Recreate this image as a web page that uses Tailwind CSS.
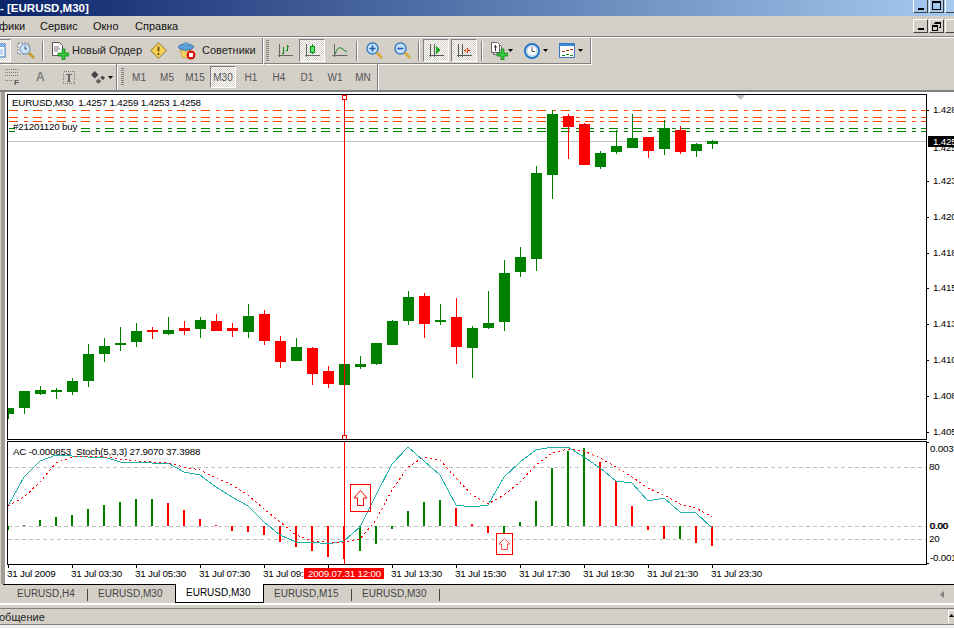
<!DOCTYPE html>
<html>
<head>
<meta charset="utf-8">
<script src="https://cdn.jsdelivr.net/npm/@tailwindcss/browser@4"></script>
</head>
<body class="m-0 overflow-hidden">
<div class="w-[954px] h-[628px] overflow-hidden bg-[#d4d0c8] flex flex-col font-['Liberation_Sans',sans-serif] text-[11px] text-black">

  <!-- title bar -->
  <div class="h-[16px] shrink-0 flex items-center justify-between bg-[linear-gradient(90deg,#0a246a,#a6caf0)] overflow-hidden">
    <span class="font-bold text-white text-[11.500px] leading-[16px] whitespace-pre">- [EURUSD,M30]</span>
    <div class="flex self-start mt-[-3px] mr-[-6px]">
      <div class="w-[15px] h-[16px] border-t border-l border-white border-r border-b border-r-[#404040] border-b-[#404040] flex items-end justify-center pb-[2px]"><div class="w-[6px] h-[2px] bg-black"></div></div>
      <div class="w-[15px] h-[16px] ml-[1px] border-t border-l border-white border-r border-b border-r-[#404040] border-b-[#404040] flex items-center justify-center"><div class="w-[9px] h-[9px] border border-t-2 border-black"></div></div>
      <div class="w-[15px] h-[16px] ml-[1px] border-t border-l border-white border-r border-b border-r-[#404040] border-b-[#404040]"></div>
    </div>
  </div>

  <!-- menu -->
  <div class="h-[21px] shrink-0 flex items-center justify-between border-b border-[#808080]">
    <div class="flex items-center text-[#111]">
      <span class="w-[40px] ml-[-1px] mr-[1px]">фики</span>
      <span class="w-[53px]">Сервис</span>
      <span class="w-[42px]">Окно</span>
      <span>Справка</span>
    </div>
    <div class="flex mr-[-6px]">
      <div class="w-[15px] h-[14px] border-t border-l border-white border-r border-b border-r-[#404040] border-b-[#404040] flex items-end justify-center pb-[2px]"><div class="w-[6px] h-[2px] bg-black"></div></div>
      <div class="w-[15px] h-[14px] ml-[1px] border-t border-l border-white border-r border-b border-r-[#404040] border-b-[#404040] flex items-center justify-center">
        <svg width="9" height="9" viewBox="0 0 9 9" shape-rendering="crispEdges"><path d="M2.500.5h6v5h-2M2 1h7M.5 3.500h5v5h-5zM0 4h6" fill="none" stroke="#000"/></svg>
      </div>
      <div class="w-[15px] h-[14px] ml-[1px] border-t border-l border-white border-r border-b border-r-[#404040] border-b-[#404040]"></div>
    </div>
  </div>

  <!-- toolbar row 1 -->
  <div class="h-[27px] shrink-0 flex border-t border-white">
    <div class="w-[263px] h-full shrink-0 flex items-center border-r border-b border-[#808080] shadow-[1px_1px_0_#fff] overflow-hidden text-[#222]">
      <div class="w-[25px] h-[23px] ml-[-14px] shrink-0 flex items-center justify-center border border-t-[#808080] border-l-[#808080] border-r-white border-b-white bg-[image:repeating-conic-gradient(#fff_0%_25%,#d4d0c8_0%_50%)] bg-[length:2px_2px]">
        <svg width="15" height="15" viewBox="0 0 15 15"><rect x="1" y="1" width="13" height="13" fill="#fff" stroke="#2f6fc0"/><rect x="1" y="1" width="13" height="3" fill="#7fb0e8"/><path d="M3 7h9M3 9h9M3 11h9" stroke="#7fb0e8"/></svg>
      </div>
      <div class="w-[26px] h-[23px] ml-[2px] shrink-0 flex items-center justify-center">
        <svg width="19" height="19" viewBox="0 0 19 19"><rect x="1" y="2" width="11" height="11" fill="#e8e8f0" stroke="#888" stroke-dasharray="2 1"/><circle cx="8" cy="8" r="5" fill="#cfe3f6" stroke="#6a8fb8"/><path d="M8 5v3h2" stroke="#405070" fill="none"/><path d="M12 12l5 5" stroke="#c89a30" stroke-width="2.500"/></svg>
      </div>
      <div class="w-[1px] h-[20px] ml-[3px] bg-[#808080] shadow-[1px_0_0_#fff] shrink-0"></div>
      <div class="flex items-center ml-[8px] shrink-0">
        <svg width="18" height="18" viewBox="0 0 18 18"><path d="M1.500 .5h7l3 3v10h-10z" fill="#fff" stroke="#555"/><path d="M3 5h5M3 7h6M3 9h4" stroke="#777"/><path d="M11 7h3v4h4v3h-4v4h-3v-4h-4v-3h4z" fill="#35c83a" stroke="#0a7a14" stroke-width=".7"/></svg>
        <span class="ml-[3px] w-[69px] whitespace-nowrap">Новый Ордер</span>
      </div>
      <svg class="ml-[9px] shrink-0" width="17" height="17" viewBox="0 0 17 17"><path d="M8.500 .7L16.300 8.500 8.500 16.300 .7 8.500z" fill="#f7cf52" stroke="#8a7030"/><path d="M8.500 4.500v5M8.500 11v2" stroke="#5a4010" stroke-width="1.600"/></svg>
      <svg class="ml-[11px] shrink-0" width="18" height="18" viewBox="0 0 18 18"><ellipse cx="8" cy="5" rx="7.500" ry="3" fill="#5ea5dd" stroke="#3a70a8"/><path d="M4 3q4-5 8 0z" fill="#79b8e8" stroke="#3a70a8" stroke-width=".6"/><path d="M2 8q6 3 12 0l-2 7q-4 2-8 0z" fill="#f5d562" stroke="#b09030" stroke-width=".6"/><circle cx="13" cy="13" r="4.500" fill="#d8140c"/><rect x="11" y="11" width="4" height="4" fill="#fff"/></svg>
      <span class="ml-[6px] whitespace-nowrap">Советники</span>
    </div>
    <div class="w-[327px] h-full shrink-0 ml-[1px] flex items-center border-r border-b border-[#808080] shadow-[1px_1px_0_#fff]">
      <div class="w-[3px] h-[21px] ml-[2px] shrink-0 bg-[image:repeating-linear-gradient(#808080_0_1px,#d4d0c8_1px_2px)]"></div>
      <!-- bar chart -->
      <div class="w-[26px] h-[23px] ml-[3px] shrink-0 flex items-center justify-center">
        <svg width="16" height="16" viewBox="0 0 16 16" shape-rendering="crispEdges"><path d="M2.500 1v13M.5 12.500h15" stroke="#666" fill="none"/><path d="M6.500 4v7M5 10h2M10.500 2v6M10 3h2M9 7h2" stroke="#0a8a1a" fill="none"/></svg>
      </div>
      <div class="w-[26px] h-[23px] ml-[1px] shrink-0 flex items-center justify-center border border-t-[#808080] border-l-[#808080] border-r-white border-b-white bg-[image:repeating-conic-gradient(#fff_0%_25%,#d4d0c8_0%_50%)] bg-[length:2px_2px]">
        <svg width="16" height="16" viewBox="0 0 16 16" shape-rendering="crispEdges"><path d="M2.500 1v13M.5 12.500h15" stroke="#666" fill="none"/><path d="M8.500 1v10" stroke="#0a8a1a"/><rect x="6.500" y="3.500" width="4" height="6" fill="#5fe06a" stroke="#0a8a1a"/></svg>
      </div>
      <div class="w-[26px] h-[23px] ml-[2px] shrink-0 flex items-center justify-center">
        <svg width="16" height="16" viewBox="0 0 16 16"><path d="M2.500 1v13M.5 12.500h15" stroke="#666" fill="none"/><path d="M3 11Q6 3 9 5t6 4" stroke="#0a8a1a" fill="none"/></svg>
      </div>
      <div class="w-[1px] h-[20px] ml-[3px] bg-[#808080] shadow-[1px_0_0_#fff] shrink-0"></div>
      <!-- zoom -->
      <div class="w-[18px] ml-[8px] shrink-0 flex justify-center">
        <svg width="17" height="17" viewBox="0 0 17 17"><circle cx="6.500" cy="6.500" r="5.500" fill="#c9e3fa" stroke="#3a7cc0" stroke-width="1.400"/><path d="M6.500 3.500v6M3.500 6.500h6" stroke="#1a5ab0" stroke-width="1.600"/><path d="M10.500 10.500l5.500 5.500" stroke="#d8a838" stroke-width="2.500"/></svg>
      </div>
      <div class="w-[18px] ml-[10px] shrink-0 flex justify-center">
        <svg width="17" height="17" viewBox="0 0 17 17"><circle cx="6.500" cy="6.500" r="5.500" fill="#c9e3fa" stroke="#3a7cc0" stroke-width="1.400"/><path d="M3.500 6.500h6" stroke="#1a5ab0" stroke-width="1.600"/><path d="M10.500 10.500l5.500 5.500" stroke="#d8a838" stroke-width="2.500"/></svg>
      </div>
      <div class="w-[1px] h-[20px] ml-[7px] bg-[#808080] shadow-[1px_0_0_#fff] shrink-0"></div>
      <div class="w-[26px] h-[23px] ml-[4px] shrink-0 flex items-center justify-center border border-t-[#808080] border-l-[#808080] border-r-white border-b-white bg-[image:repeating-conic-gradient(#fff_0%_25%,#d4d0c8_0%_50%)] bg-[length:2px_2px]">
        <svg width="16" height="16" viewBox="0 0 16 16" shape-rendering="crispEdges"><path d="M2.500 1v13M.5 12.500h15M6.500 1v13" stroke="#555" fill="none"/><path d="M8 3l5 4-5 4z" fill="#1cae2a"/></svg>
      </div>
      <div class="w-[26px] h-[23px] ml-[2px] shrink-0 flex items-center justify-center border border-t-[#808080] border-l-[#808080] border-r-white border-b-white bg-[image:repeating-conic-gradient(#fff_0%_25%,#d4d0c8_0%_50%)] bg-[length:2px_2px]">
        <svg width="16" height="16" viewBox="0 0 16 16" shape-rendering="crispEdges"><path d="M2.500 1v13M.5 12.500h15M6.500 1v13" stroke="#555" fill="none"/><path d="M8 7.500h6M11 5v5" stroke="#d81c0c"/><path d="M9 6l3 1.500-3 1.500z" fill="#e8801c"/></svg>
      </div>
      <div class="w-[1px] h-[20px] ml-[4px] bg-[#808080] shadow-[1px_0_0_#fff] shrink-0"></div>
      <!-- drop-down icons -->
      <svg class="ml-[8px] shrink-0" width="18" height="18" viewBox="0 0 18 18"><path d="M3.500 2.500h6l2 2v8h-8z" fill="#eee" stroke="#666"/><path d="M1.500 .5h6l2 2v8h-8z" fill="#fff" stroke="#666"/><path d="M5.500 3v6M4 5h3" stroke="#333" fill="none"/><path d="M11 7h3v4h4v3h-4v4h-3v-4h-4v-3h4z" fill="#35c83a" stroke="#0a7a14" stroke-width=".7"/></svg>
      <svg class="ml-[0px] shrink-0" width="5" height="3" viewBox="0 0 5 3"><path d="M0 0h5L2.500 3z" fill="#000"/></svg>
      <svg class="ml-[11px] shrink-0" width="16" height="16" viewBox="0 0 16 16"><circle cx="8" cy="8" r="7" fill="#eef4fa" stroke="#1f78c8" stroke-width="2"/><circle cx="8" cy="8" r="5" fill="#fff" stroke="#bcd"/><path d="M8 4v4.500h3" stroke="#555" fill="none"/></svg>
      <svg class="ml-[3px] shrink-0" width="5" height="3" viewBox="0 0 5 3"><path d="M0 0h5L2.500 3z" fill="#000"/></svg>
      <svg class="ml-[11px] shrink-0" width="16" height="15" viewBox="0 0 16 15" shape-rendering="crispEdges"><rect x=".5" y=".5" width="15" height="14" fill="#fff" stroke="#3a78c0"/><rect x="1" y="1" width="14" height="2" fill="#3a88d8"/><path d="M3 8h3M7 7h3M11 6h3" stroke="#b03010"/><path d="M3 12h3M7 11h3M11 12h3" stroke="#108a20"/></svg>
      <svg class="ml-[3px] shrink-0" width="5" height="3" viewBox="0 0 5 3"><path d="M0 0h5L2.500 3z" fill="#000"/></svg>
    </div>
  </div>

  <!-- toolbar row 2 -->
  <div class="h-[26px] shrink-0 flex">
    <div class="w-[117px] h-full shrink-0 flex items-center border-r border-[#808080] shadow-[1px_0_0_#fff] text-[#555]">
      <svg class="ml-[5px] shrink-0" width="15" height="16" viewBox="0 0 15 16" shape-rendering="crispEdges"><path d="M0 .5h13M0 3.500h13M0 6.500h13M0 11.500h8" stroke="#777" stroke-dasharray="1 1"/><text x="9" y="16" font-size="8" font-weight="700" fill="#555">F</text></svg>
      <span class="ml-[16px] text-[12px] font-bold text-[#808080]">A</span>
      <svg class="ml-[18px] shrink-0" width="12" height="13" viewBox="0 0 12 13" shape-rendering="crispEdges"><rect x=".5" y=".5" width="11" height="12" fill="none" stroke="#777" stroke-dasharray="1 1"/><path d="M3 3.500h6M6 3v7M4 10.500h4" stroke="#666" stroke-width="1.500"/></svg>
      <svg class="ml-[16px] shrink-0" width="14" height="13" viewBox="0 0 15 14"><path d="M0 4l4-4 4 4-4 4z" fill="#444"/><path d="M5 11l3-3 3 3-3 3z" fill="#666"/><path d="M10 7l2-2 3 2-2 3z" fill="#444"/></svg>
      <svg class="ml-[3px] shrink-0" width="5" height="3" viewBox="0 0 5 3"><path d="M0 0h5L2.500 3z" fill="#000"/></svg>
    </div>
    <div class="w-[260px] h-full ml-[1px] shrink-0 flex items-center border-r border-[#808080] shadow-[1px_0_0_#fff] text-[#555] text-[10px]">
      <div class="w-[3px] h-[18px] ml-[3px] mr-[1px] shrink-0 bg-[image:repeating-linear-gradient(#808080_0_1px,#d4d0c8_1px_2px)]"></div>
      <span class="w-[28px] text-center">M1</span>
      <span class="w-[28px] text-center">M5</span>
      <span class="w-[28px] text-center">M15</span>
      <span class="w-[26px] h-[22px] mx-[1px] flex items-center justify-center border border-t-[#808080] border-l-[#808080] border-r-white border-b-white bg-[image:repeating-conic-gradient(#fff_0%_25%,#d4d0c8_0%_50%)] bg-[length:2px_2px]">M30</span>
      <span class="w-[28px] text-center">H1</span>
      <span class="w-[28px] text-center">H4</span>
      <span class="w-[28px] text-center">D1</span>
      <span class="w-[28px] text-center">W1</span>
      <span class="w-[28px] text-center">MN</span>
    </div>
  </div>

  <!-- chart area -->
  <div class="h-[494px] shrink-0 flex border-t-2 border-[#808080] bg-white">
    <div class="w-[7px] h-full shrink-0 flex bg-white">
      <div class="w-[1px] bg-[#d4d0c8]"></div>
      <div class="w-[4px] bg-[#a09c94]"></div>
    </div>
    <div class="flex flex-col pt-[2px]">
      <!-- main panel -->
      <div class="flex">
        <div class="w-[920px] h-[346px] border border-black bg-white">
          <svg width="918" height="344" viewBox="8 95 918 344" class="block tracking-[-0.2px]">
            <g shape-rendering="crispEdges">
              <path d="M8 141.500H926" stroke="#c0c0c0"/>
              <g stroke-dasharray="9 6 4 5" fill="none">
                <path d="M9 110.500H926M9 117.500H926M9 121.500H926" stroke="#ff4500"/>
                <path d="M9 128.500H926M9 131.500H926" stroke="#008000"/>
              </g>
              <path fill="none" stroke="#008000" d="M8.500 408V419M24.500 391V414M40.500 386V395M56.500 388V399M72.500 378V395M88.500 344V387M104.500 338V362M120.500 327V351M136.500 323V347M168.500 317V335M200.500 317V338M248.500 304V338M296.500 338V361M344.500 364V385M360.500 356V369M376.500 343V365M392.500 320V345M408.500 291V325M440.500 304V325M472.500 326V378M488.500 291V329M504.500 260V331M520.500 247V277M536.500 166V271M552.500 110V199M600.500 151V169M616.500 130V154M632.500 114V148M664.500 120V155M696.500 143V157M712.500 140V149"/>
              <path fill="none" stroke="#ff0000" d="M152.500 327V339M184.500 321V335M216.500 314V331M232.500 323V337M264.500 310V345M280.500 336V368M312.500 347V385M328.500 366V388M424.500 293V338M456.500 298V364M568.500 114V159M584.500 123V165M648.500 137V158M680.500 126V154"/>
              <path fill="#008000" d="M3 408h11v6H3zM19 391h11v17H19zM35 390h11v4H35zM51 390h11v2H51zM67 381h11v11H67zM83 354h11v27H83zM99 346h11v8H99zM115 343h11v2H115zM131 331h11v11H131zM163 330h11v4H163zM195 320h11v9H195zM243 316h11v16H243zM291 347h11v14H291zM339 364h11v21H339zM355 364h11v3H355zM371 343h11v21H371zM387 321h11v24H387zM403 297h11v24H403zM435 320h11v2H435zM467 328h11v20H467zM483 323h11v5H483zM499 273h11v49H499zM515 257h11v15H515zM531 173h11v86H531zM547 114h11v61H547zM595 153h11v14H595zM611 146h11v6H611zM627 138h11v10H627zM659 128h11v21H659zM691 144h11v7H691zM707 141h11v3H707z"/>
              <path fill="#ff0000" d="M147 330h11v2H147zM179 328h11v3H179zM211 321h11v10H211zM227 328h11v3H227zM259 314h11v27H259zM275 341h11v21H275zM307 348h11v26H307zM323 371h11v13H323zM419 296h11v28H419zM451 317h11v30H451zM563 116h11v11H563zM579 124h11v41H579zM643 137h11v14H643zM675 130h11v22H675z"/>
            </g>
            <polygon points="736,95 745,95 740.500,100" fill="#c0c0c0"/>
            <text x="12" y="105.500" font-size="9.800" fill="#000" xml:space="preserve">EURUSD,M30  1.4257 1.4259 1.4253 1.4258</text>
            <rect x="15" y="124" width="65" height="10" fill="#fff"/>
            <text x="13" y="129.500" font-size="9.800" fill="#000">#21201120 buy</text>
            <path d="M344.500 95V439" stroke="#ff0000" shape-rendering="crispEdges"/>
            <rect x="342.500" y="95.500" width="4" height="4" fill="#fff" stroke="#ff0000" shape-rendering="crispEdges"/>
            <rect x="342.500" y="435.500" width="4" height="4" fill="#fff" stroke="#ff0000" shape-rendering="crispEdges"/>
          </svg>
        </div>
        <svg width="27" height="346" viewBox="927 94 27 346" class="block tracking-[-0.2px]">
          <path shape-rendering="crispEdges" stroke="#000" d="M927 110.500h2M927 181.500h2M927 217.500h2M927 253.500h2M927 288.500h2M927 324.500h2M927 360.500h2M927 396.500h2M927 432.500h2"/>
          <g font-size="9.800" fill="#000">
            <text x="933" y="113">1.428</text>
            <text x="933" y="150.500">1.425</text>
            <text x="933" y="184">1.423</text>
            <text x="933" y="220">1.420</text>
            <text x="933" y="256">1.418</text>
            <text x="933" y="291">1.415</text>
            <text x="933" y="327">1.413</text>
            <text x="933" y="363">1.410</text>
            <text x="933" y="399">1.408</text>
            <text x="933" y="435">1.405</text>
          </g>
          <rect x="928" y="136" width="26" height="11" fill="#000"/>
          <text x="933" y="145" font-size="9.800" fill="#fff">1.425</text>
        </svg>
      </div>
      <!-- indicator panel -->
      <div class="flex mt-[1px]">
        <div class="w-[920px] h-[124px] border border-black bg-white">
          <svg width="918" height="122" viewBox="8 442 918 122" class="block tracking-[-0.2px]">
            <path d="M8 467.500H926M8 526.500H926M8 539.500H926" stroke="#c0c0c0" stroke-dasharray="4 3" shape-rendering="crispEdges"/>
            <g shape-rendering="crispEdges" stroke-width="2" fill="none">
              <path stroke="#008000" d="M8 526V530M24 525V526M40 520V526M56 517V526M72 515V526M88 509V526M104 505V526M120 502V526M136 499V526M152 499V526M360 526V551M376 526V544M392 526V529M408 511V526M424 502V526M440 500V526M504 526V533M520 522V526M536 501V526M552 468V526M568 451V526M584 448V526M680 526V539"/>
              <path stroke="#ff0000" d="M168 503V526M184 510V526M200 519V526M216 525V526M232 526V531M248 526V532M264 526V535M280 526V542M296 526V547M312 526V551M328 526V557M344 526V559M456 508V526M472 524V526M488 526V533M600 462V526M616 481V526M632 506V526M648 526V530M664 526V539M696 526V543M712 526V546"/>
            </g>
            <polyline fill="none" stroke="#20b2aa" shape-rendering="crispEdges" points="8,506 24,477 40,461 56,455 72,456 88,457 104,457 120,462 136,462 152,463 168,463 184,472 200,475 216,487 232,497 248,506 264,522 280,535 296,542 312,542 328,544 344,541 360,527 376,495 392,464 408,447 424,461 440,475 456,505 472,507 488,505 504,477 520,462 536,450 552,447 568,447 584,457 600,468 616,481 632,483 648,501 664,498 680,512 696,513 712,528"/>
            <polyline fill="none" stroke="#ff0000" stroke-dasharray="2 3" shape-rendering="crispEdges" points="8,506 24,497 40,482 56,463 72,457 88,456 104,457 120,459 136,461 152,462 168,463 184,467 200,470 216,478 232,485 248,495 264,509 280,522 296,535 312,541 328,542 344,542 360,539 376,520 392,490 408,467 424,457 440,460 456,478 472,495 488,504 504,495 520,482 536,465 552,453 568,449 584,451 600,458 616,467 632,477 648,488 664,495 680,504 696,508 712,517"/>
            <text x="13" y="454.500" font-size="9.800" fill="#000" xml:space="preserve">AC -0.000853  Stoch(5,3,3) 27.9070 37.3988</text>
            <path d="M344.500 442V564" stroke="#ff0000" shape-rendering="crispEdges"/>
            <rect x="350.500" y="484.500" width="20" height="27" fill="none" stroke="#ff0000" shape-rendering="crispEdges"/>
            <polygon points="360.500,490.500 367,498 363.500,498 363.500,505.500 357.500,505.500 357.500,498 354,498" fill="#fff" stroke="#ff0000"/>
            <rect x="496.500" y="533.500" width="16" height="21" fill="#fff" stroke="#ff0000" shape-rendering="crispEdges"/>
            <polygon points="504.500,538.500 510,544 507.500,544 507.500,549.500 501.500,549.500 501.500,544 499,544" fill="#fff" stroke="#ff5050"/>
          </svg>
        </div>
        <svg width="27" height="124" viewBox="927 441 27 124" class="block tracking-[-0.2px]">
          <path shape-rendering="crispEdges" stroke="#000" d="M927 442.500h2M927 563.500h2"/>
          <g font-size="9.800" fill="#000">
            <text x="930" y="451.500">0.0037</text>
            <text x="929" y="469.500">80</text>
            <text x="930" y="528.500">0.00</text>
            <text x="929.500" y="528.500">0.00</text>
            <text x="929" y="541.500">20</text>
            <text x="930" y="560.500">-0.001</text>
          </g>
        </svg>
      </div>
      <!-- time axis -->
      <svg width="947" height="18" viewBox="7 565 947 18" class="block tracking-[-0.2px]">
        <path shape-rendering="crispEdges" stroke="#000" d="M8 565v3M72 565v3M136 565v3M200 565v3M264 565v3M328 565v3M392 565v3M456 565v3M520 565v3M584 565v3M648 565v3M712 565v3"/>
        <g font-size="9.800" fill="#000">
          <text x="7" y="576.500">31 Jul 2009</text>
          <text x="71" y="576.500">31 Jul 03:30</text>
          <text x="135" y="576.500">31 Jul 05:30</text>
          <text x="199" y="576.500">31 Jul 07:30</text>
          <text x="263" y="576.500">31 Jul 09:30</text>
          <text x="391" y="576.500">31 Jul 13:30</text>
          <text x="455" y="576.500">31 Jul 15:30</text>
          <text x="519" y="576.500">31 Jul 17:30</text>
          <text x="583" y="576.500">31 Jul 19:30</text>
          <text x="647" y="576.500">31 Jul 21:30</text>
          <text x="711" y="576.500">31 Jul 23:30</text>
        </g>
        <rect x="304" y="568" width="80" height="11" fill="#ff0000"/>
        <text x="308" y="576.500" font-size="9.800" fill="#fff">2009.07.31 12:00</text>
      </svg>
    </div>
  </div>

  <!-- tabs -->
  <div class="h-[21px] shrink-0 flex pl-[3px] relative text-[10px] text-[#444] border-b-2 border-white">
    <div class="flex-none w-[85px] h-[19px] pb-[1px] border-t border-black flex items-center pl-[14px] relative after:content-[''] after:absolute after:right-[0px] after:top-[4px] after:h-[12px] after:w-[1px] after:bg-[#444]">EURUSD,H4</div>
    <div class="flex-none w-[87px] h-[19px] pb-[1px] border-t border-black flex items-center pl-[10px]">EURUSD,M30</div>
    <div class="flex-none w-[89px] h-[19px] pb-[1px] border-l border-r border-b border-black bg-white flex items-center pl-[10px] text-black">EURUSD,M30</div>
    <div class="flex-none w-[88px] h-[19px] pb-[1px] border-t border-black flex items-center pl-[10px] relative after:content-[''] after:absolute after:right-[0px] after:top-[4px] after:h-[12px] after:w-[1px] after:bg-[#444]">EURUSD,M15</div>
    <div class="flex-none w-[88px] h-[19px] pb-[1px] border-t border-black flex items-center pl-[10px] relative after:content-[''] after:absolute after:right-[0px] after:top-[4px] after:h-[12px] after:w-[1px] after:bg-[#444]">EURUSD,M30</div>
    <div class="flex-1 h-[19px] border-t border-black flex items-center justify-end pr-[10px]">
      <svg width="4" height="7" viewBox="0 0 4 7"><path d="M4 0v7L0 3.500z" fill="#808080"/></svg>
    </div>
  </div>

  <!-- status bar -->
  <div class="h-[3px] shrink-0"></div>
  <div class="h-[17px] shrink-0 flex items-center justify-between border-t border-b border-[#808080] overflow-hidden">
    <span class="ml-[-1px] mt-[2px] whitespace-nowrap text-[#222]">общение</span>
    <div class="w-[6px] h-[13px] border-t border-l border-white flex items-start justify-center pt-[3px]">
      <svg width="5" height="3" viewBox="0 0 5 3"><path d="M0 3h5L2.500 0z" fill="#000"/></svg>
    </div>
  </div>
  <div class="flex-1 bg-[#f0f0f0]"></div>
</div>
</body>
</html>
